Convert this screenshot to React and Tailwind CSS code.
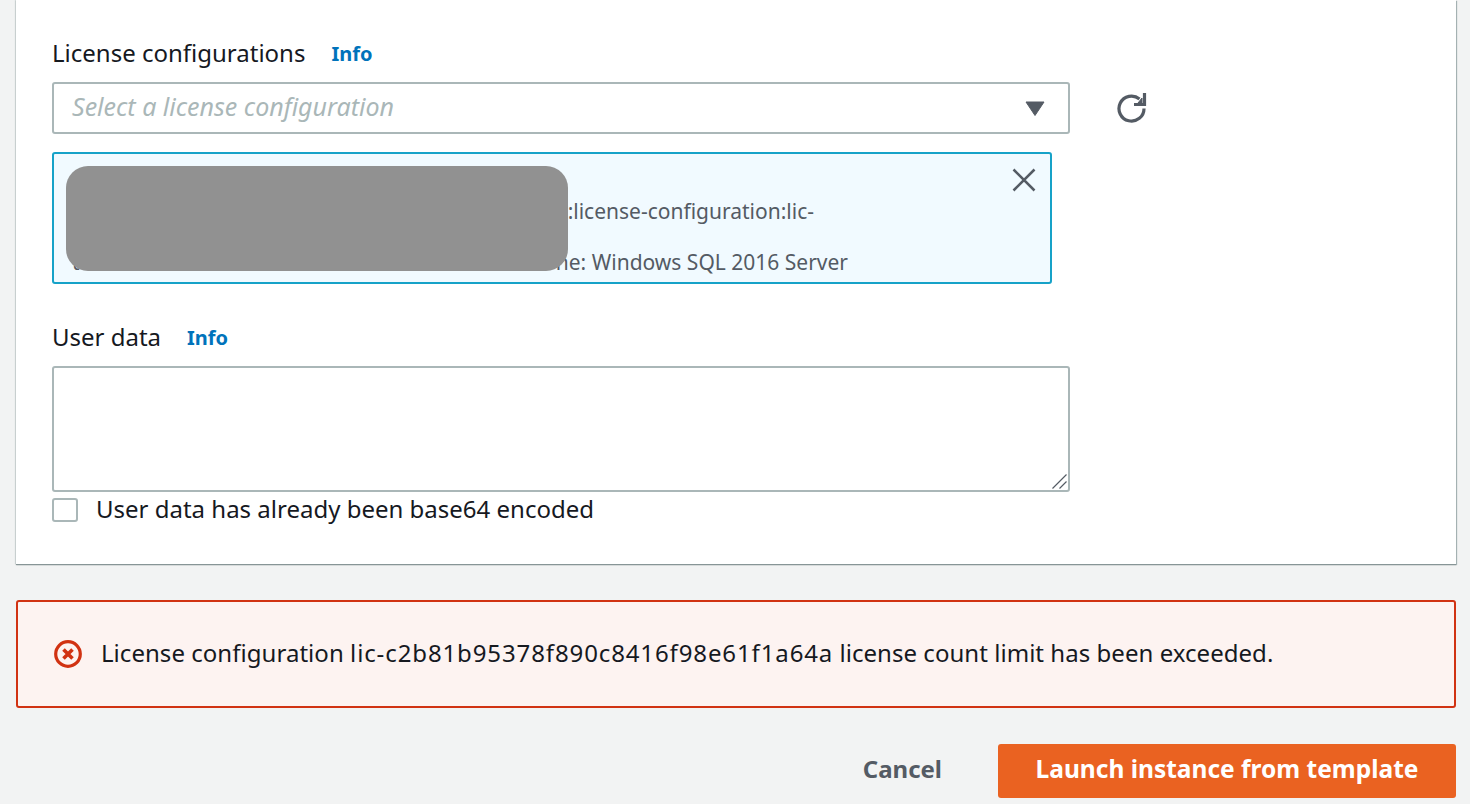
export default function App() {
    return (
        <div className="h-[804px] overflow-hidden bg-[#f2f3f3] font-['Noto_Sans',sans-serif] text-[#16191f]">
            {/* Form card */}
            <div className="ml-4 mr-[14px] h-[564px] bg-white pl-9 pt-[37px] shadow-[0_1px_1px_0_#879596,1px_1px_1px_0_#aab7b8,-1px_0_1px_0_#d5dbdb]">
                <div className="flex h-[34px] items-center gap-[26px] pb-[2px] text-[24px] leading-[32px]">
                    <span>License configurations</span>
                    <span className="pt-[2px] text-[20px] font-bold text-[#0073bb]">Info</span>
                </div>

                <div className="mt-[11px] flex items-center">
                    <div className="flex h-[52px] w-[1018px] items-center justify-between rounded-[3px] border-2 border-[#aab7b8] pl-[18px] pr-[23px]">
                        <span className="pb-[2px] text-[25px] italic text-[#aab7b8]">Select a license configuration</span>
                        <svg width="20" height="15" viewBox="0 0 20 15">
                            <path d="M1 1h18L10 14.500z" fill="#545b64" stroke="#545b64" strokeLinejoin="round" />
                        </svg>
                    </div>
                    <svg width="32" height="32" viewBox="0 0 32 32" fill="none" stroke="#545b64" strokeWidth="3.200" className="ml-[46px]">
                        <path d="M28 16.500A12.500 12.500 0 1 1 23.500 7" />
                        <path d="M28.500 1v11.500H18" />
                        <path d="M26 6v5h-4z" fill="#545b64" strokeWidth="1" />
                    </svg>
                </div>

                {/* Selected license */}
                <div className="relative mt-[18px] h-[132px] w-[1000px] rounded-[3px] border-2 border-[#16a2c8] bg-[#f1faff] text-[21px] text-[#545b64]">
                    <div className="flex h-[42px] justify-end pr-[14px] pt-[14px]">
                        <svg width="24" height="24" viewBox="0 0 24 24" fill="none" stroke="#545b64" strokeWidth="2.500">
                            <path d="M1.500 1.500l21 21M22.500 1.500l-21 21" />
                        </svg>
                    </div>
                    <div className="ml-[18px] w-[742px] text-right leading-[30px]">:license-configuration:lic-</div>
                    <div className="ml-[18px] mt-[21px] flex w-[776px] justify-between leading-[30px]">
                        <span>t</span>
                        <span>ne: Windows SQL 2016 Server</span>
                    </div>
                    <div className="absolute left-[12px] top-[12px] h-[105px] w-[502px] rounded-[22px] bg-[#919191]" />
                </div>

                <div className="mt-[37px] flex h-[34px] items-center gap-[26px] pb-[2px] text-[24px] leading-[32px]">
                    <span>User data</span>
                    <span className="pt-[2px] text-[20px] font-bold text-[#0073bb]">Info</span>
                </div>

                <div className="relative mt-[11px] h-[126px] w-[1018px]">
                    <textarea className="block h-full w-full resize-none rounded-[3px] border-2 border-[#aab7b8] bg-white" />
                    <svg width="18" height="18" viewBox="0 0 18 18" fill="none" stroke="#545b64" strokeWidth="1.200" className="absolute bottom-[2px] right-[2px]">
                        <path d="M2.500 16.500L16.500 2.500M9.500 16.500l7-7" />
                    </svg>
                </div>

                <div className="mt-[6px] flex h-[24px] items-center gap-[18px] text-[24px]">
                    <div className="h-[24px] w-[26px] shrink-0 rounded-[3px] border-2 border-[#aab7b8] bg-white" />
                    <span className="pb-[2px]">User data has already been base64 encoded</span>
                </div>
            </div>

            {/* Error alert */}
            <div className="ml-4 mr-[14px] mt-9 flex h-[108px] items-center gap-[19px] rounded-[3px] border-2 border-[#d13212] bg-[#fdf3f1] pl-[36px] text-[24px] tracking-[0.04px]">
                <svg width="28" height="28" viewBox="0 0 28 28" fill="none" stroke="#d13212" className="shrink-0">
                    <circle cx="14" cy="14" r="12.300" strokeWidth="3.200" />
                    <path d="M9.500 9.500l9 9M18.500 9.500l-9 9" strokeWidth="3.600" />
                </svg>
                <span className="pb-[2px]">
                    License configuration <span className="tracking-[0.88px]">lic-c2b81b95378f890c8416f98e61f1a64a</span> license count limit has been exceeded.
                </span>
            </div>

            {/* Actions */}
            <div className="ml-4 mr-[14px] mt-9 flex items-center justify-end">
                <span className="mr-14 pb-[5px] text-[24px] font-bold text-[#545b64]">Cancel</span>
                <button className="h-[54px] w-[458px] rounded-[3px] bg-[#ea6221] pb-[3px] text-[24.500px] font-bold text-white">
                    Launch instance from template
                </button>
            </div>
        </div>
    );
}
